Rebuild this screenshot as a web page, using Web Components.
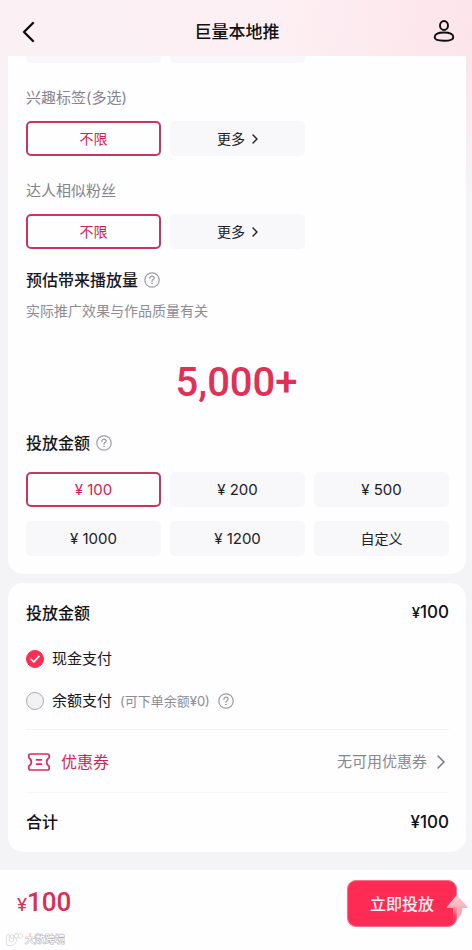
<!DOCTYPE html>
<html lang="zh-CN">
<head>
<meta charset="utf-8">
<meta name="viewport" content="width=device-width, initial-scale=1">
<title>巨量本地推</title>
<style>
  body { margin: 0; font-family: Inter, "Noto Sans CJK SC", sans-serif; color: #17171c; }
</style>
</head>
<body>
<promo-page>
  <promo-header slot="header">巨量本地推</promo-header>

  <promo-card class="first">
    <chip-peek></chip-peek>
    <option-group label="兴趣标签(多选)">
      <option-chip selected>不限</option-chip>
      <option-chip more>更多</option-chip>
    </option-group>
    <option-group label="达人相似粉丝">
      <option-chip selected>不限</option-chip>
      <option-chip more>更多</option-chip>
    </option-group>
    <estimate-block note="实际推广效果与作品质量有关" value="5,000+">预估带来播放量</estimate-block>
    <option-group label="投放金额" heading>
      <option-chip price selected>¥ 100</option-chip>
      <option-chip price>¥ 200</option-chip>
      <option-chip price>¥ 500</option-chip>
      <option-chip price>¥ 1000</option-chip>
      <option-chip price>¥ 1200</option-chip>
      <option-chip>自定义</option-chip>
    </option-group>
  </promo-card>

  <promo-card>
    <amount-row small-sign amount="100">投放金额</amount-row>
    <pay-methods></pay-methods>
    <coupon-row status="无可用优惠券">优惠券</coupon-row>
    <amount-row amount="100">合计</amount-row>
  </promo-card>

  <checkout-bar slot="footer" amount="100">立即投放</checkout-bar>
</promo-page>

<script>
const base = `<style>
  *, *::before, *::after { box-sizing: border-box; }
  button { font: inherit; color: inherit; border: 0; background: none; padding: 0; margin: 0; cursor: pointer; }
  svg { display: block; }
  h1, h2, p { margin: 0; }
</style>`;

function define(name, render) {
  customElements.define(name, class extends HTMLElement {
    connectedCallback() {
      if (this.shadowRoot) return;
      this.attachShadow({ mode: 'open' }).innerHTML = base + render(this);
    }
  });
}

define('promo-page', () => `<style>
  :host {
    display: flex; flex-direction: column; min-height: 100vh;
    background:
      linear-gradient(to bottom, #f4f3f600 40px, #f4f3f6 190px),
      linear-gradient(100deg, #fbf1f5 0%, #fdeff3 45%, #fce2e9 80%, #fbdfe7 100%);
  }
  main { flex: 1; display: flex; flex-direction: column; gap: 9px; padding: 0 6px 18px 8px; }
</style>
<slot name="header"></slot><main><slot></slot></main><slot name="footer"></slot>`);

define('promo-header', () => `<style>
  :host { display: block; }
  header { display: grid; grid-template-columns: 40px 1fr 40px; align-items: center; height: 56px; padding: 8px 8px 0 10px; }
  h1 { font-size: 17px; line-height: 24px; font-weight: 500; text-align: center; color: #111; }
  button { display: grid; place-items: center; height: 40px; color: #0e0e12; }
</style>
<header>
  <button type="button" aria-label="返回"><svg width="24" height="24" viewBox="0 0 24 24" fill="none" stroke="currentColor" stroke-width="2.4" stroke-linecap="round" stroke-linejoin="round"><path d="M15 3 6 12l9 9"/></svg></button>
  <h1><slot></slot></h1>
  <button type="button" aria-label="我的"><svg width="24" height="24" viewBox="0 0 24 24" fill="none" stroke="currentColor" stroke-width="1.9"><ellipse cx="12" cy="5.500" rx="4" ry="4.500"/><path d="M12 12.500c5.600 0 9.300 1.700 9.300 4.700 0 2.700-2.700 3.500-9.300 3.500s-9.300-.8-9.300-3.500c0-3 3.700-4.700 9.300-4.700z"/></svg></button>
</header>`);

define('promo-card', () => `<style>
  :host { display: block; background: #fefdff; border-radius: 15px; padding: 17px 17px 18px 18px; }
  :host(.first) { border-top-left-radius: 0; border-top-right-radius: 0; padding-top: 0; }
</style><slot></slot>`);

define('chip-peek', () => `<style>
  :host { display: grid; grid-template-columns: repeat(3, 1fr); gap: 9px; height: 7px; }
  i { background: #f8f7fa; border-radius: 0 0 4px 4px; }
</style><i></i><i></i>`);

define('help-button', () => `<style>
  :host { display: inline-block; color: #9b9ba1; }
  button { display: block; }
</style>
<button type="button" aria-label="说明"><svg width="16" height="16" viewBox="0 0 16 16" fill="none" stroke="currentColor" stroke-width="1.2" stroke-linecap="round"><circle cx="8" cy="8" r="7.200"/><path d="M5.900 6.300c0-1.300.9-2.100 2.100-2.100s2.100.8 2.100 1.900c0 1.500-2.100 1.500-2.100 3.200" stroke-width="1.300"/><circle cx="8" cy="11.500" r=".5" fill="currentColor" stroke-width=".6"/></svg></button>`);

define('option-group', el => `<style>
  :host { display: block; padding-top: 23px; }
  .label { display: flex; align-items: center; gap: 6px; font-size: 15px; line-height: 24px; color: #85858b; margin-bottom: 11px; }
  :host([heading]) { padding-top: 0; }
  :host([heading]) .label { font-size: 16px; font-weight: 500; color: #17171c; margin-bottom: 17px; }
  .grid { display: grid; grid-template-columns: repeat(3, 1fr); gap: 14px 9px; }
</style>
<div class="label" id="l"><span>${el.getAttribute('label')}</span>${el.hasAttribute('heading') ? '<help-button></help-button>' : ''}</div>
<div class="grid" role="group" aria-labelledby="l"><slot></slot></div>`);

define('option-chip', el => `<style>
  :host { display: block; }
  button { display: flex; align-items: center; justify-content: center; gap: 7px; width: 100%; height: 35px; border-radius: 5px; background: #f8f7fa; font-size: 14px; line-height: 20px; color: #202025; }
  :host([price]) button { font-size: 15px; }
  :host([selected]) button { background: #fefdff; border: 2px solid #c23a5b; color: #c92650; }
</style>
<button type="button" aria-pressed="${el.hasAttribute('selected')}"><slot></slot>${el.hasAttribute('more') ? '<svg width="6" height="10" viewBox="0 0 6 10" fill="none" stroke="currentColor" stroke-width="1.400" stroke-linecap="round" stroke-linejoin="round"><path d="M1 1l4 4-4 4"/></svg>' : ''}</button>`);

define('estimate-block', el => `<style>
  :host { display: block; padding-top: 19px; }
  .head { display: flex; align-items: center; gap: 6px; }
  h2 { font-size: 16px; line-height: 24px; font-weight: 500; }
  p { font-size: 14px; line-height: 20px; color: #8c8c92; margin-top: 9px; }
  output { display: block; text-align: center; font: 500 40px/48px Roboto, sans-serif; color: #e13056; padding: 38px 2px 24px 0; }
</style>
<div class="head"><h2><slot></slot></h2><help-button></help-button></div>
<p>${el.getAttribute('note')}</p>
<output>${el.getAttribute('value')}</output>`);

define('amount-row', el => `<style>
  :host { display: flex; align-items: center; justify-content: space-between; font-size: 16px; line-height: 24px; font-weight: 500; color: #111116; }
  .sum { font-size: 17px; }
  :host([small-sign]) .sign { font-size: 15px; }
</style>
<span><slot></slot></span><span class="sum"><span class="sign">¥</span>${el.getAttribute('amount')}</span>`);

define('pay-methods', () => `<style>
  :host { display: block; border-bottom: 1px solid #f4f3f6; padding: 22px 0 16px; margin-bottom: 20px; }
  fieldset { border: 0; margin: 0; padding: 0; display: flex; flex-direction: column; gap: 18px; }
  .row { display: flex; align-items: center; line-height: 24px; font-size: 15px; }
  label { display: flex; align-items: center; gap: 8px; }
  .mark { display: grid; }
  .mark > * { grid-area: 1 / 1; margin: 0; }
  input { appearance: none; width: 18px; height: 18px; border-radius: 50%; border: 1px solid #a9a9ae; background: #f2f2f5; }
  input:checked { background: #fa2d55; border-color: #fa2d55; }
  svg { visibility: hidden; pointer-events: none; }
  input:checked + svg { visibility: visible; }
  small { font-size: 13px; color: #8c8c92; margin: 0 8px; }
</style>
<fieldset aria-label="支付方式">
  <div class="row"><label><span class="mark"><input type="radio" name="pay" checked><svg width="18" height="18" viewBox="0 0 18 18" fill="none" stroke="#fff" stroke-width="1.700" stroke-linecap="round" stroke-linejoin="round"><path d="M5.200 9.300l2.700 2.700 5-5.600"/></svg></span><span>现金支付</span></label></div>
  <div class="row"><label><span class="mark"><input type="radio" name="pay"><svg width="18" height="18" viewBox="0 0 18 18" fill="none" stroke="#fff" stroke-width="1.700" stroke-linecap="round" stroke-linejoin="round"><path d="M5.200 9.300l2.700 2.700 5-5.600"/></svg></span><span>余额支付</span></label><small>(可下单余额¥0)</small><help-button></help-button></div>
</fieldset>`);

define('coupon-row', el => `<style>
  :host { display: block; border-bottom: 1px solid #f8f7fa; padding-bottom: 18px; margin-bottom: 17px; }
  button { display: flex; align-items: center; width: 100%; line-height: 24px; padding-left: 1px; }
  .name { font-size: 16px; color: #c92a50; margin-left: 10px; flex: 1; text-align: left; }
  .status { font-size: 15px; color: #88888e; margin-right: 10px; }
  .arrow { margin-right: 4px; }
</style>
<button type="button">
  <svg width="24" height="20" viewBox="0 0 24 20" fill="none" stroke="#cf3158" stroke-width="1.700" stroke-linecap="round" stroke-linejoin="round"><path d="M3.500 2h17c1 0 1.700.7 1.700 1.700v2.100c-1.700.9-2.500 2.400-2.500 4.200s.8 3.300 2.500 4.200v2.100c0 1-.7 1.700-1.700 1.700h-17c-1 0-1.700-.7-1.700-1.700v-2.100c1.700-.9 2.500-2.400 2.500-4.200s-.8-3.300-2.500-4.200V3.700C1.800 2.700 2.500 2 3.500 2z"/><path d="M9.500 7.800h5M9.500 12.200h5"/></svg>
  <span class="name"><slot></slot></span><span class="status">${el.getAttribute('status')}</span>
  <svg class="arrow" width="8" height="14" viewBox="0 0 8 14" fill="none" stroke="#77777d" stroke-width="1.500" stroke-linecap="round" stroke-linejoin="round"><path d="M1 1l6 6-6 6"/></svg>
</button>`);

define('checkout-bar', el => `<style>
  :host { display: block; background: #fefdff; }
  footer { display: flex; justify-content: space-between; align-items: flex-start; padding: 10px 15px 0 17px; height: 80px; position: relative; }
  .total { font: 500 26px/44px Roboto, sans-serif; color: #d92f54; }
  .total span { font-size: 19px; font-weight: 400; }
  .go { position: relative; width: 110px; height: 47px; padding-bottom: 2px; border-radius: 9px; background: #fe2c55; border: 1px solid #fb6d88; color: #fff0f4; font-size: 16px; font-weight: 500; }
  .go svg { position: absolute; right: -12px; top: 13px; }
  .brand { position: absolute; left: 6px; bottom: 3px; display: flex; align-items: center; gap: 2px; font-size: 10px; line-height: 16px; color: #fff; -webkit-text-stroke: 1px #b4b3b7; paint-order: stroke fill; }
</style>
<footer>
  <div class="total"><span>¥</span>${el.getAttribute('amount')}</div>
  <button class="go" type="button"><slot></slot>
    <svg width="22" height="28" viewBox="0 0 22 28"><defs><linearGradient id="g" x1="0" y1="0" x2="0" y2="1"><stop offset="0" stop-color="#fbd0d5"/><stop offset=".4" stop-color="#fcb4bf"/><stop offset="1" stop-color="#fe2c55" stop-opacity=".2"/></linearGradient></defs><path d="M11.500 1.500 21.500 13c.4.600.2 1-.5 1h-4.500c-.2 5-2 9-7.500 13.500-.7.400-2 .3-2-1V14H1.500c-.9 0-1.200-.5-.6-1.200L10.300 1.500c.4-.5.800-.5 1.200 0z" fill="url(#g)"/></svg>
  </button>
  <div class="brand"><svg width="17" height="13" viewBox="0 0 17 13" fill="#fff" stroke="#bdbcc0" stroke-width="1" stroke-linejoin="round"><path d="M1 2h2.500v6.500c1 1.500 3.500 1.200 4-.5l.5-3 2 .5c.4 4-1.500 6.500-5 6.500H1z"/><circle cx="6" cy="3.500" r="1.500"/><circle cx="10.500" cy="2.700" r="2"/><circle cx="14.300" cy="3" r="2"/></svg><span>大数跨境</span></div>
</footer>`);
</script>
</body>
</html>
